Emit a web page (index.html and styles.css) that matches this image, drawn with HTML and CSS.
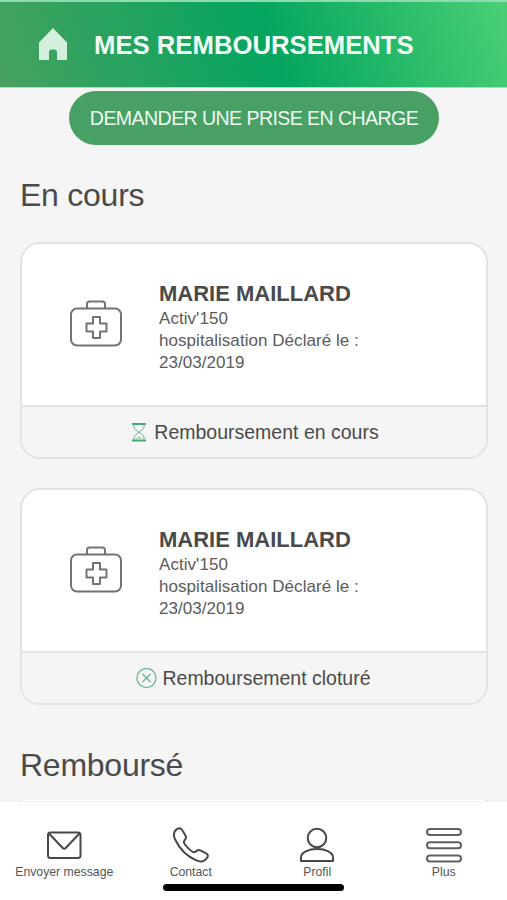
FILE: index.html
```html
<!DOCTYPE html>
<html lang="fr">
<head>
<meta charset="utf-8">
<title>Mes remboursements</title>
<link rel="stylesheet" href="styles.css">
</head>
<body>
<header class="header">
  <svg class="home" viewBox="0 0 30 34" width="30" height="34"><path d="M15 1 29 15.500V33H19V25.500Q19 22.500 16.500 22.500H13.500Q11 22.500 11 25.500V33H1V15.500Z"/></svg>
  <h1 class="title">MES REMBOURSEMENTS</h1>
</header>
<main class="content">
  <button class="cta">DEMANDER UNE PRISE EN CHARGE</button>
  <h2 class="section">En cours</h2>
  <article class="card">
    <div class="card-body">
      <svg class="kit" viewBox="0 0 54 50" width="54" height="50"><rect x="2" y="8.500" width="50" height="37" rx="6"/><path d="M18 8.500V4Q18 1.500 20.500 1.500H33.500Q36 1.500 36 4V8.500M24 17H31V23.500H37.500V31.500H31V38H24V31.500H17.500V23.500H24Z"/></svg>
      <div class="info">
        <h3 class="name">MARIE MAILLARD</h3>
        <p>Activ'150</p>
        <p>hospitalisation Déclaré le :<br>23/03/2019</p>
      </div>
    </div>
    <footer class="status pending">
      <svg class="glass" viewBox="0 0 14 20" width="14" height="20"><path class="bar" d="M0 2H14M0 18.500H14"/><path d="M2 2V5C2 7.500 5 8.500 7 10.200C9 12 12 13 12 15.500V18M12 2V5C12 7.500 9 8.500 7 10.200C5 12 2 13 2 15.500V18M4.500 17 7 15 9.500 17"/></svg>
      <span>Remboursement en cours</span>
    </footer>
  </article>
  <article class="card">
    <div class="card-body">
      <svg class="kit" viewBox="0 0 54 50" width="54" height="50"><rect x="2" y="8.500" width="50" height="37" rx="6"/><path d="M18 8.500V4Q18 1.500 20.500 1.500H33.500Q36 1.500 36 4V8.500M24 17H31V23.500H37.500V31.500H31V38H24V31.500H17.500V23.500H24Z"/></svg>
      <div class="info">
        <h3 class="name">MARIE MAILLARD</h3>
        <p>Activ'150</p>
        <p>hospitalisation Déclaré le :<br>23/03/2019</p>
      </div>
    </div>
    <footer class="status closed">
      <svg class="cross" viewBox="0 0 21 21" width="21" height="21"><circle cx="10.500" cy="10" r="9.600"/><path d="M6.500 6 14.500 14M14.500 6 6.500 14"/></svg>
      <span>Remboursement cloturé</span>
    </footer>
  </article>
  <h2 class="section last">Remboursé</h2>
  <div class="next-card"></div>
</main>
<nav class="tabs">
  <a class="tab"><svg viewBox="0 0 36 36" width="36" height="36"><rect x="2" y="5.500" width="32.500" height="25.500" rx="2.500"/><path d="M3 6.500 16.700 21Q18.200 22.500 19.700 21L33.500 6.500"/></svg>Envoyer message</a>
  <a class="tab"><svg viewBox="0 0 36 36" width="36" height="36"><path d="M1.700 4.500C2.700 2.800 5 1.300 7 1.300C8.500 1.300 9.300 3 10.300 4.800L12.800 9.300C14 11.600 10.900 12.800 10.900 15C10.900 17.500 18.300 24.800 20.800 25.200C22.700 25.500 24 22.800 26 22.900C27.200 23 31.800 25.600 33.500 26.600C35.500 27.800 35 29.300 33.800 31.300C32.100 34.200 27.800 35.300 24 33.700C14 29.700 6 20.800 2 12.300C.7 9.400 .7 6.500 1.700 4.500Z"/></svg>Contact</a>
  <a class="tab"><svg viewBox="0 0 36 36" width="36" height="36"><circle cx="18" cy="11" r="9.300"/><path d="M2 34V30.500C2 25.500 9 22 18 22S34 25.500 34 30.500V34Z"/></svg>Profil</a>
  <a class="tab plus"><svg viewBox="0 0 36 36" width="36" height="36"><rect x="1" y="2" width="34" height="6" rx="3"/><rect x="1" y="15.200" width="34" height="6" rx="3"/><rect x="1" y="28.500" width="34" height="6" rx="3"/></svg>Plus</a>
  <span class="indicator"></span>
</nav>
</body>
</html>
```
FILE: styles.css
```css
* { box-sizing: border-box; margin: 0; padding: 0; }
body {
  width: 507px;
  height: 900px;
  overflow: hidden;
  display: flex;
  flex-direction: column;
  background: #f5f5f5;
  color: #4a4a4a;
  font-family: "Liberation Sans", Arial, sans-serif;
}
.header {
  flex: none;
  height: 88px;
  display: flex;
  align-items: center;
  padding-left: 38px;
  border-top: 2px solid #8edbb0;
  border-bottom: 1px solid #a5dfbd;
  background: linear-gradient(70deg, #48a160 0%, #04a55f 53%, #4bcf75 100%);
}
.home { fill: #d5efdf; margin-top: -1px; }
.title { margin-left: 26px; font-size: 25.7px; line-height: 30px; color: #f0fff6; white-space: nowrap; }
.content { flex: 1; min-height: 0; overflow: hidden; padding: 3px 19px 0 20px; }
.cta {
  display: block;
  width: 370px;
  height: 54px;
  margin-left: 49px;
  border: 0;
  border-radius: 27px;
  background: #48a065;
  color: #effaf2;
  font: 19.6px "Liberation Sans", Arial, sans-serif;
  letter-spacing: -0.6px;
  white-space: nowrap;
}
.section { font-size: 32px; letter-spacing: -0.25px; font-weight: 400; line-height: 38px; margin: 31px 0 28px; }
.section.last { margin: 41px 0 16px; }
.card {
  height: 217px;
  margin-bottom: 29px;
  border: 2px solid #e3e3e3;
  border-radius: 20px;
  overflow: hidden;
  background: #fff;
}
.next-card { height: 217px; border: solid #e3e3e3; border-width: 0 2px; background: #fff; }
.card-body { height: 161px; display: flex; padding: 36px 0 0 47px; }
.kit { margin: 20px 36px 0 0; fill: none; stroke: #737373; stroke-width: 2; stroke-linejoin: round; }
.info { font-size: 17px; line-height: 22px; color: #5b5b5b; letter-spacing: 0.05px; }
.name { font-size: 22px; line-height: 28px; color: #4a4a4a; letter-spacing: 0; }
.status {
  height: 52px;
  display: flex;
  align-items: center;
  justify-content: center;
  gap: 8px;
  border-top: 2px solid #e3e3e3;
  background: #f5f5f5;
  font-size: 19.5px;
}
.status svg { fill: none; stroke: #67b58b; stroke-width: 1; }
.status .bar { stroke: #4ba477; stroke-width: 2; }
.pending { padding-left: 3px; }
.closed { gap: 5px; padding-right: 1px; }
.closed .cross { stroke-width: 1.2; }
.tabs {
  position: relative;
  flex: none;
  height: 99px;
  display: grid;
  grid-template-columns: repeat(4, 1fr);
  padding: 25px 0 0 1px;
  border-top: 1px solid #f0f0f0;
  background: #fff;
}
.tab { display: flex; flex-direction: column; align-items: center; gap: 1px; font-size: 12.25px; line-height: 17px; color: #555; white-space: nowrap; }
.tab svg { fill: none; stroke: #484848; stroke-width: 2; stroke-linejoin: round; }
.plus svg { stroke: #606060; }
.indicator { position: absolute; left: 163px; top: 82px; width: 181px; height: 7px; border-radius: 4px; background: #000; }
```
